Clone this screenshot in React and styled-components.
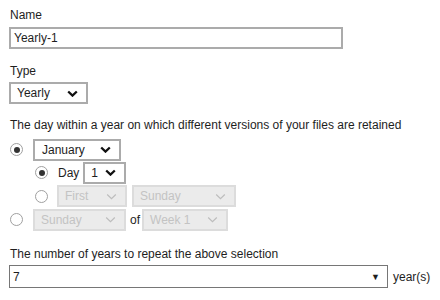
import React from 'react'
import styled, { createGlobalStyle } from 'styled-components'

const GlobalStyle = createGlobalStyle`
  body {
    margin: 0;
    background: #fff;
    font-family: "Liberation Sans", Arial, sans-serif;
    font-size: 12px;
    color: #1e1e1e;
  }
`

const Form = styled.div`
  padding: 8px 9px 0 9px;
  display: flex;
  flex-direction: column;
`

const Label = styled.div`
  line-height: 14px;
  margin-left: 1px;
  margin-top: ${p => p.$top || 0}px;
`

const TextInput = styled.div`
  box-sizing: border-box;
  width: 334px;
  height: 22px;
  margin-top: 5px;
  border: 2px solid #ababab;
  padding-left: 3px;
  display: flex;
  align-items: center;
  font-size: 12px;
`

const SelectBox = styled.div`
  box-sizing: border-box;
  width: ${p => p.$w}px;
  height: 22px;
  border: 2px solid ${p => (p.$disabled ? '#dcdcdc' : '#ababab')};
  background: ${p => (p.$disabled ? '#ebebeb' : '#fff')};
  color: ${p => (p.$disabled ? '#c3c3c3' : '#1e1e1e')};
  display: flex;
  align-items: center;
  justify-content: space-between;
  padding: 0 8px 0 ${p => p.$pad || 6}px;
  flex-shrink: 0;
`

const Field = styled.div`
  margin-top: ${p => p.$top || 0}px;
`

const Row = styled.div`
  display: flex;
  align-items: center;
  height: ${p => p.$h || 23}px;
  padding-left: ${p => p.$indent || 0}px;
`

const Radio = styled.span`
  box-sizing: border-box;
  width: 13px;
  height: 13px;
  border-radius: 50%;
  border: 1.5px solid #a0a0a0;
  margin-left: 1px;
  margin-right: ${p => p.$gap || 10}px;
  display: inline-flex;
  align-items: center;
  justify-content: center;
  flex-shrink: 0;

  &::after {
    content: '';
    width: 6px;
    height: 6px;
    border-radius: 50%;
    background: ${p => (p.$checked ? '#333' : 'transparent')};
  }
`

const Text = styled.span`
  margin: 0 ${p => p.$r || 4}px 0 ${p => p.$l || 0}px;
`

const Rows = styled.div`
  margin-top: 6px;
  display: flex;
  flex-direction: column;
`

const Gap = styled.span`
  width: ${p => p.$w}px;
  flex-shrink: 0;
`

const RepeatRow = styled.div`
  display: flex;
  align-items: center;
  margin-top: 4px;
`

const RepeatSelect = styled.div`
  box-sizing: border-box;
  width: 379px;
  height: 23px;
  border: 1px solid #767676;
  display: flex;
  align-items: center;
  justify-content: space-between;
  padding: 0 7px 0 3px;
`

const Unit = styled.span`
  margin-left: 5px;
`

function Chevron({ disabled }) {
  return (
    <svg width="11" height="7" viewBox="0 0 11 7">
      <polyline
        points="1.2,1.5 5.5,5.6 9.8,1.5"
        fill="none"
        stroke={disabled ? '#bdbdbd' : '#111'}
        strokeWidth={disabled ? 1.2 : 2.3}
      />
    </svg>
  )
}

function Select({ value, width, disabled, pad }) {
  return (
    <SelectBox $w={width} $disabled={disabled} $pad={pad}>
      <span>{value}</span>
      <Chevron disabled={disabled} />
    </SelectBox>
  )
}

export default function App() {
  return (
    <>
      <GlobalStyle />
      <Form>
        <Label>Name</Label>
        <TextInput>Yearly-1</TextInput>

        <Label $top={15}>Type</Label>
        <Field $top={4}>
          <Select value="Yearly" width={79} />
        </Field>

        <Label $top={14}>
          The day within a year on which different versions of your files are retained
        </Label>
        <Rows>
          <Row>
            <Radio $checked $gap={10} />
            <Select value="January" width={88} pad={7} />
          </Row>
          <Row $indent={25}>
            <Radio $checked $gap={10} />
            <Text $r={4}>Day</Text>
            <Select value="1" width={43} />
          </Row>
          <Row $indent={25} $h={24}>
            <Radio $gap={9} />
            <Select value="First" width={70} disabled pad={6} />
            <Gap $w={5} />
            <Select value="Sunday" width={104} disabled pad={6} />
          </Row>
          <Row>
            <Radio $gap={10} />
            <Select value="Sunday" width={93} disabled pad={6} />
            <Text $l={4} $r={2}>of</Text>
            <Select value="Week 1" width={86} disabled pad={6} />
          </Row>
        </Rows>

        <Label $top={16}>The number of years to repeat the above selection</Label>
        <RepeatRow>
          <RepeatSelect>
            <span>7</span>
            <span style={{ fontSize: 9 }}>▼</span>
          </RepeatSelect>
          <Unit>year(s)</Unit>
        </RepeatRow>
      </Form>
    </>
  )
}
